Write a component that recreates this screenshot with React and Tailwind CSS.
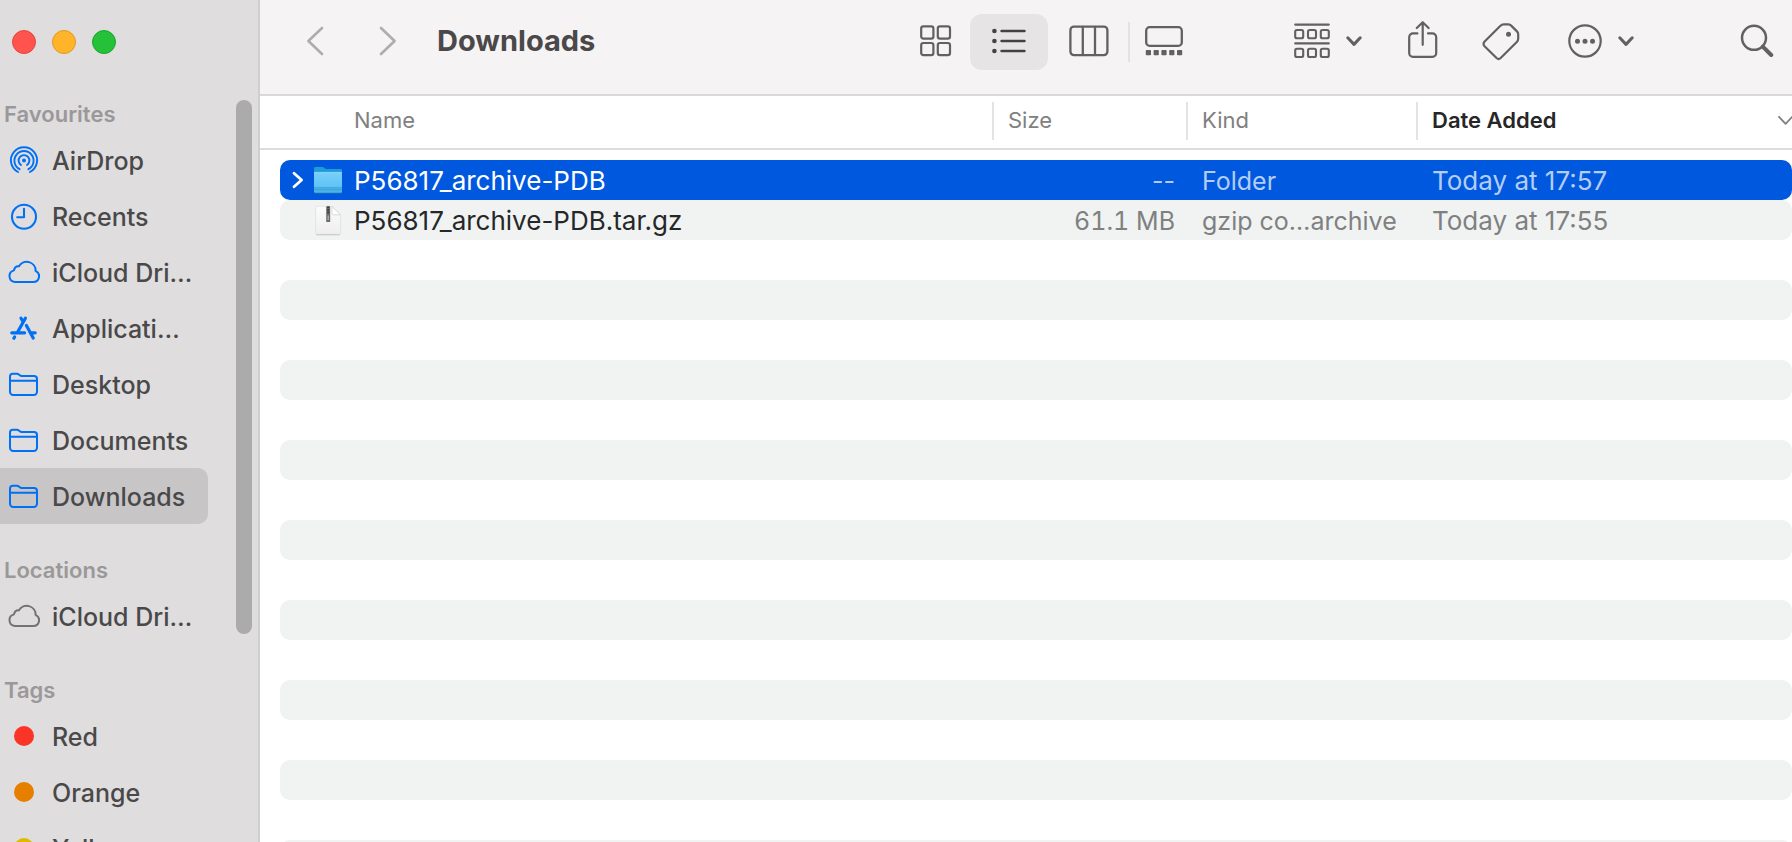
import React from "react";

const stroke = {
  fill: "none",
  stroke: "currentColor",
  strokeLinecap: "round",
  strokeLinejoin: "round",
};

function AirDropIcon() {
  return (
    <svg width="32" height="32" viewBox="0 0 32 32" {...stroke} strokeWidth="1.9" aria-hidden="true">
      <circle cx="16" cy="16.4" r="2" fill="currentColor" stroke="none" />
      <path d="M13 21a5.4 5.4 0 1 1 6 0" />
      <path d="M11.6 25.2a9.6 9.6 0 1 1 8.8 0" />
      <path d="M10 28a13.1 13.1 0 1 1 12 0" />
    </svg>
  );
}

function ClockIcon() {
  return (
    <svg width="32" height="32" viewBox="0 0 32 32" {...stroke} strokeWidth="2.1" aria-hidden="true">
      <circle cx="16" cy="16.8" r="12" />
      <path d="M16 8.8V17.2H9.2" />
    </svg>
  );
}

function CloudIcon() {
  return (
    <svg width="32" height="32" viewBox="0 0 32 32" {...stroke} strokeWidth="2" aria-hidden="true">
      <path d="M6.8 26H25.2A5.8 5.8 0 0 0 27.6 14.9A8.9 8.9 0 0 0 11 10.2C8.4 9.9 6.5 11.6 6 14.4A5.9 5.9 0 0 0 6.8 26Z" />
    </svg>
  );
}

function AppStoreIcon() {
  return (
    <svg width="32" height="32" viewBox="0 0 32 32" {...stroke} strokeWidth="3.2" aria-hidden="true">
      <path d="M17.4 6.2L9.8 19.8" />
      <path d="M13 6.2L14.8 9.2" />
      <path d="M3.8 20.8H16.6" />
      <path d="M18.4 13.4L25.2 26" />
      <path d="M23.5 20.8H27.2" />
      <path d="M6.6 25L5.9 26.2" />
    </svg>
  );
}

function FolderOutlineIcon() {
  return (
    <svg width="32" height="32" viewBox="0 0 32 32" {...stroke} strokeWidth="2" aria-hidden="true">
      <path d="M2 8.6V23.8A3.2 3.2 0 0 0 5.2 27H25.8A3.2 3.2 0 0 0 29 23.8V11A3 3 0 0 0 26 8H13.6C11.6 8 11.2 5.8 8.8 5.8H4.8A2.8 2.8 0 0 0 2 8.6Z" />
      <path d="M2.4 12.8H28.6" />
    </svg>
  );
}

function TagDot({ className }) {
  return <span className={"block size-5 rounded-full " + className} aria-hidden="true" />;
}

function ChevronDown() {
  return (
    <svg width="16" height="12" viewBox="0 0 16 12" {...stroke} strokeWidth="3" aria-hidden="true">
      <path d="M1.8 2.8L8 9.4L14.2 2.8" />
    </svg>
  );
}

function GridIcon() {
  return (
    <svg width="32" height="32" viewBox="0 0 32 32" {...stroke} strokeWidth="2.2" aria-hidden="true">
      <rect x="1.2" y="1.4" width="12.2" height="12.2" rx="2.2" />
      <rect x="17.8" y="1.4" width="12.2" height="12.2" rx="2.2" />
      <rect x="1.2" y="18" width="12.2" height="12.2" rx="2.2" />
      <rect x="17.8" y="18" width="12.2" height="12.2" rx="2.2" />
    </svg>
  );
}

function ListIcon() {
  return (
    <svg width="34" height="26" viewBox="0 0 34 26" {...stroke} strokeWidth="2.6" aria-hidden="true">
      {[3, 13, 23].map((y) => (
        <g key={y}>
          <circle cx="2.4" cy={y} r="2.3" fill="currentColor" stroke="none" />
          <path d={`M9.6 ${y}H32.4`} />
        </g>
      ))}
    </svg>
  );
}

function ColumnsIcon() {
  return (
    <svg width="40" height="32" viewBox="0 0 40 32" {...stroke} strokeWidth="2.3" aria-hidden="true">
      <rect x="1.4" y="1.6" width="37" height="28.6" rx="3.6" />
      <path d="M13.8 2V30M26 2V30" />
    </svg>
  );
}

function GalleryIcon() {
  return (
    <svg width="38" height="32" viewBox="0 0 38 32" {...stroke} strokeWidth="2.3" aria-hidden="true">
      <rect x="1.2" y="2.2" width="35.6" height="18.6" rx="3.4" />
      {[0.8, 8.6, 16.4, 24.2, 32].map((x) => (
        <rect key={x} x={x} y="25" width="5.2" height="5.2" rx="0.8" fill="currentColor" stroke="none" />
      ))}
    </svg>
  );
}

function GroupIcon() {
  return (
    <svg width="36" height="36" viewBox="0 0 36 36" {...stroke} strokeWidth="2.1" aria-hidden="true">
      <path d="M1.2 1.6H34.8M1.2 20.4H34.8" />
      {[1.2, 14, 26.8].map((x) => (
        <g key={x}>
          <rect x={x} y="7" width="8" height="8.2" rx="1.8" />
          <rect x={x} y="25.8" width="8" height="8.2" rx="1.8" />
        </g>
      ))}
    </svg>
  );
}

function ShareIcon() {
  return (
    <svg width="30" height="40" viewBox="0 0 30 40" {...stroke} strokeWidth="2.2" aria-hidden="true">
      <path d="M9.4 12.4H5A3.8 3.8 0 0 0 1.2 16.2V32A3.8 3.8 0 0 0 5 35.8H24.4A3.8 3.8 0 0 0 28.2 32V16.2A3.8 3.8 0 0 0 24.4 12.4H20" />
      <path d="M14.7 23.8V1.6M8.8 7L14.7 1.2L20.6 7" />
    </svg>
  );
}

function TagIcon() {
  return (
    <svg width="38" height="40" viewBox="0 0 38 40" {...stroke} strokeWidth="2.2" aria-hidden="true">
      <path d="M2.4 20.8L18.2 5Q19.8 3.4 21.8 3.4H26.4Q28 3.4 29.2 4.6L35 10.4Q36.2 11.6 36.2 13.2V17.8Q36.2 19.6 34.8 21L18.4 37.2Q16.6 38.8 14.8 37.2L2.6 25.2Q0.6 23 2.4 20.8Z" />
      <circle cx="26.5" cy="13.2" r="2.5" fill="currentColor" stroke="none" />
    </svg>
  );
}

function MoreIcon() {
  return (
    <svg width="34" height="34" viewBox="0 0 34 34" {...stroke} strokeWidth="2.2" aria-hidden="true">
      <circle cx="17" cy="17" r="15.7" />
      {[9.5, 17, 24.5].map((x) => (
        <circle key={x} cx={x} cy="17.2" r="2.5" fill="currentColor" stroke="none" />
      ))}
    </svg>
  );
}

function SearchIcon() {
  return (
    <svg width="34" height="34" viewBox="0 0 34 34" {...stroke} aria-hidden="true">
      <circle cx="14" cy="13.8" r="12" strokeWidth="2.5" />
      <path d="M22.8 22.6L31.2 31" strokeWidth="4" />
    </svg>
  );
}

function FolderIcon() {
  return (
    <svg width="30" height="30" viewBox="0 0 30 30" aria-hidden="true">
      <defs>
        <linearGradient id="folderFront" x1="0" y1="0" x2="0" y2="1">
          <stop offset="0" stopColor="#79d0fb" />
          <stop offset="1" stopColor="#56bdf0" />
        </linearGradient>
      </defs>
      <path d="M1 3.4Q1 2 2.4 2H9.2Q10.4 2 11.2 2.8L12 3.6Q12.4 4 13.4 4H27.6Q29 4 29 5.4V12H1Z" fill="#1f9bd7" />
      <path d="M1 7.2H29V26Q29 28 27 28H3Q1 28 1 26Z" fill="url(#folderFront)" />
      <path d="M1 22.6H29V26Q29 28 27 28H3Q1 28 1 26Z" fill="#4cb4e9" />
      <path d="M1 22.8H29M1 24.8H29" stroke="#3199d2" strokeWidth="0.7" />
      <path d="M1 7.4H29" stroke="#8fdcff" strokeWidth="0.8" />
      <path d="M1.6 28.2H28.4" stroke="#1b74bd" strokeWidth="0.8" />
    </svg>
  );
}

function ArchiveIcon() {
  return (
    <svg width="30" height="32" viewBox="0 0 30 32" aria-hidden="true">
      <defs>
        <linearGradient id="sheet" x1="0" y1="0" x2="0" y2="1">
          <stop offset="0" stopColor="#fcfcfc" />
          <stop offset="1" stopColor="#eeeeee" />
        </linearGradient>
      </defs>
      <path d="M2.6 3.6Q2.6 2.2 4 2.2H19L27.6 11V29Q27.6 30.4 26.2 30.4H4Q2.6 30.4 2.6 29Z" fill="url(#sheet)" stroke="#dcdcdc" strokeWidth="0.7" />
      <path d="M3.2 30.8H27" stroke="#bdbdbd" strokeWidth="0.8" />
      <path d="M19 2.4V9.4Q19 10.8 20.4 10.8H27.4Z" fill="#ffffff" stroke="#d0d0d0" strokeWidth="0.8" />
      <rect x="13.2" y="2.2" width="4" height="15.8" rx="0.6" fill="#6d6d6d" />
      <path d="M15.2 2.4V10" stroke="#3c3c3c" strokeWidth="2" strokeDasharray="1.6 1" />
      <path d="M15.2 11.5V16" stroke="#b5b5b5" strokeWidth="1.2" />
    </svg>
  );
}

const sections = [
  {
    title: "Favourites",
    items: [
      { label: "AirDrop", icon: <AirDropIcon /> },
      { label: "Recents", icon: <ClockIcon /> },
      { label: "iCloud Dri…", icon: <CloudIcon /> },
      { label: "Applicati…", icon: <AppStoreIcon /> },
      { label: "Desktop", icon: <FolderOutlineIcon /> },
      { label: "Documents", icon: <FolderOutlineIcon /> },
      { label: "Downloads", icon: <FolderOutlineIcon />, current: true },
    ],
  },
  {
    title: "Locations",
    items: [{ label: "iCloud Dri…", icon: <CloudIcon />, muted: true }],
  },
  {
    title: "Tags",
    items: [
      { label: "Red", icon: <TagDot className="bg-[#fb3428]" /> },
      { label: "Orange", icon: <TagDot className="bg-[#e67e00]" /> },
      { label: "Yellow", icon: <TagDot className="bg-[#e3b800]" /> },
    ],
  },
];

function Sidebar() {
  return (
    <aside className="relative flex w-[260px] shrink-0 flex-col overflow-hidden border-r-2 border-[#d0cecf] bg-[#dfddde]">
      <div className="flex h-[68px] shrink-0 items-center gap-4 px-3 pt-4">
        <button type="button" aria-label="Close" className="size-6 rounded-full border border-[#e2463f] bg-[#ff544d]" />
        <button type="button" aria-label="Minimise" className="size-6 rounded-full border border-[#e09a1a] bg-[#ffb429]" />
        <button type="button" aria-label="Zoom" className="size-6 rounded-full border border-[#16a92b] bg-[#25c138]" />
      </div>
      <nav className="shrink-0" aria-label="Sidebar">
        {sections.map((section) => (
          <section key={section.title}>
            <h2 className="flex h-16 items-center pt-7 pl-1 text-[22px] font-semibold text-[#9a9899]">{section.title}</h2>
            <ul>
              {section.items.map((item) => (
                <li key={item.label}>
                  <a
                    href="#"
                    aria-current={item.current ? "page" : undefined}
                    className={
                      "mr-[50px] flex h-14 items-center gap-3 rounded-r-[10px] pl-2 text-[25px] font-medium whitespace-nowrap text-[#4a494a] " +
                      (item.current ? "bg-[#c7c5c6]" : "")
                    }
                  >
                    <span className={"flex w-8 shrink-0 justify-center " + (item.muted ? "text-[#747273]" : "text-[#0070f5]")}>
                      {item.icon}
                    </span>
                    <span className="pt-[3px]">{item.label}</span>
                  </a>
                </li>
              ))}
            </ul>
          </section>
        ))}
      </nav>
      <div className="absolute top-[100px] right-[6px] bottom-0 w-4" aria-hidden="true">
        <div className="h-[72%] rounded-full bg-[#ababab]" />
      </div>
    </aside>
  );
}

const viewButton = "flex h-14 items-center justify-center pb-[2px]";

function Toolbar() {
  return (
    <header className="flex h-24 shrink-0 items-center border-b-2 border-[#dad8d9] bg-[#f5f3f4] pr-[18px] pb-3 pl-[46px] text-[#626061]">
      <button type="button" aria-label="Back" className="mr-[55px] text-[#aeacad]">
        <svg width="18" height="30" viewBox="0 0 18 30" {...stroke} strokeWidth="2.6" aria-hidden="true">
          <path d="M16 2L2.4 15L16 28" />
        </svg>
      </button>
      <button type="button" aria-label="Forward" className="mr-10 text-[#aeacad]">
        <svg width="18" height="30" viewBox="0 0 18 30" {...stroke} strokeWidth="2.6" aria-hidden="true">
          <path d="M2 2L15.6 15L2 28" />
        </svg>
      </button>
      <h1 className="flex-1 text-[29px] font-bold text-[#4a4849]">Downloads</h1>
      <div className="mr-24 flex items-center pt-[2px]" role="group" aria-label="View">
        <button type="button" aria-label="Icons" className={viewButton + " w-[68px]"}>
          <GridIcon />
        </button>
        <button type="button" aria-label="List" aria-pressed="true" className={viewButton + " w-[78px] rounded-xl bg-[#e6e4e5] text-[#434142]"}>
          <ListIcon />
        </button>
        <button type="button" aria-label="Columns" className={viewButton + " w-20 pl-[2px]"}>
          <ColumnsIcon />
        </button>
        <span className="h-10 w-[2px] bg-[#e4e2e3]" aria-hidden="true" />
        <button type="button" aria-label="Gallery" className={viewButton + " w-[68px]"}>
          <GalleryIcon />
        </button>
      </div>
      <button type="button" aria-label="Group" className="mr-[46px] flex items-center gap-4">
        <GroupIcon />
        <ChevronDown />
      </button>
      <button type="button" aria-label="Share" className="mr-11">
        <ShareIcon />
      </button>
      <button type="button" aria-label="Edit tags" className="mr-12">
        <TagIcon />
      </button>
      <button type="button" aria-label="More actions" className="mr-[106px] flex items-center gap-4">
        <MoreIcon />
        <ChevronDown />
      </button>
      <button type="button" aria-label="Search">
        <SearchIcon />
      </button>
    </header>
  );
}

const headerCell = "border-b-2 border-[#dcdcdc] p-0 pb-[2px] text-left font-normal";
const headerInner = "flex h-[38px] items-center border-l-2 border-[#e3e3e3] pb-[2px] pl-[14px]";

const files = [
  { name: "P56817_archive-PDB", size: "--", kind: "Folder", date: "Today at 17:57", folder: true, selected: true },
  { name: "P56817_archive-PDB.tar.gz", size: "61.1 MB", kind: "gzip co…archive", date: "Today at 17:55" },
];

const fillers = Array.from({ length: 16 }, (_, i) => i);

function FileRow({ file }) {
  const fill = file.selected ? "bg-[#0058de]" : "bg-[#f1f3f3]";
  const detail = file.selected ? "text-[#b3cdf5]" : "text-[#7f8080]";
  return (
    <tr className="h-10 whitespace-nowrap" aria-selected={file.selected ? "true" : "false"}>
      <td className="p-0" />
      <td className={"rounded-l-[10px] p-0 text-[26px] leading-8 " + fill}>
        <div className={"flex items-center " + (file.selected ? "text-white" : "text-[#262727]")}>
          <span className="flex w-[33px] justify-center pl-[2px]">
            {file.folder && (
              <button type="button" aria-label="Expand folder" className="flex">
                <svg width="12" height="18" viewBox="0 0 12 18" {...stroke} strokeWidth="2.8" aria-hidden="true">
                  <path d="M2 2.2L9.6 9L2 15.8" />
                </svg>
              </button>
            )}
          </span>
          <span className="mr-[11px]">{file.folder ? <FolderIcon /> : <ArchiveIcon />}</span>
          <span className="pt-[2px]">{file.name}</span>
        </div>
      </td>
      <td className={"p-0 pt-[2px] pr-[11px] text-right " + (file.folder ? "" : "tabular-nums ") + fill + " " + detail}>{file.size}</td>
      <td className={"p-0 pt-[2px] pl-4 " + fill + " " + detail}>{file.kind}</td>
      <td className={"rounded-r-[10px] p-0 pt-[2px] pl-4 text-[26px] leading-8 " + fill + " " + detail}>{file.date}</td>
    </tr>
  );
}

function FileTable() {
  return (
    <div className="flex-1 overflow-hidden bg-white">
      <table className="w-full table-fixed border-separate border-spacing-0 text-[25px] leading-8">
        <colgroup>
          <col className="w-5" />
          <col />
          <col className="w-[194px]" />
          <col className="w-[230px]" />
          <col className="w-[376px]" />
        </colgroup>
        <thead>
          <tr className="h-[54px] text-[22px] text-[#808080]">
            <td className={headerCell} />
            <th scope="col" className={headerCell}>
              <div className="flex h-[38px] items-center pb-[2px] pl-[74px]">Name</div>
            </th>
            <th scope="col" className={headerCell}>
              <div className={headerInner}>Size</div>
            </th>
            <th scope="col" className={headerCell}>
              <div className={headerInner}>Kind</div>
            </th>
            <th scope="col" aria-sort="descending" className={headerCell}>
              <div className={headerInner + " justify-between overflow-hidden"}>
                <span className="font-semibold text-[#262626]">Date Added</span>
                <svg width="14" height="10" viewBox="0 0 14 10" {...stroke} strokeWidth="1.8" aria-hidden="true">
                  <path d="M1 1.8L7.6 8.8L14.2 1.8" />
                </svg>
              </div>
            </th>
          </tr>
        </thead>
        <tbody>
          <tr className="h-[10px]" aria-hidden="true">
            <td colSpan={5} className="p-0" />
          </tr>
          {files.map((file) => (
            <FileRow key={file.name} file={file} />
          ))}
          {fillers.map((i) => (
            <tr key={i} className="h-10" aria-hidden="true">
              <td className="p-0" />
              <td colSpan={4} className={i % 2 ? "rounded-[10px] bg-[#f1f3f3] p-0" : "p-0"} />
            </tr>
          ))}
        </tbody>
      </table>
    </div>
  );
}

export default function App() {
  return (
    <div className="flex h-screen overflow-hidden font-['Inter','Liberation_Sans',sans-serif]">
      <Sidebar />
      <main className="flex min-w-0 flex-1 flex-col">
        <Toolbar />
        <FileTable />
      </main>
    </div>
  );
}
